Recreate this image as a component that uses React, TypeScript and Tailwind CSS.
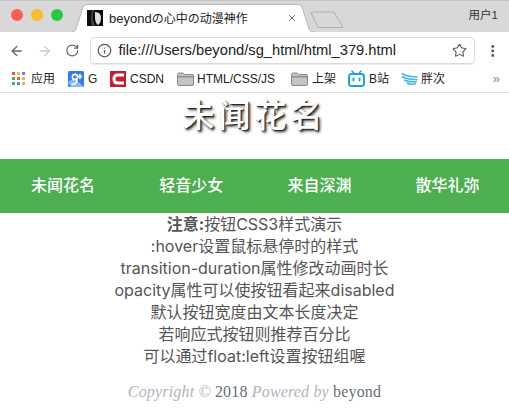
import { ArrowLeft, ArrowRight, Info, MoreVertical, RotateCw, Star, X } from "lucide-react";

const sans = "font-['Liberation_Sans','Noto_Sans_CJK_SC',sans-serif]";
const bodyFont = "font-['Inter','Noto_Sans_CJK_SC',sans-serif]";

function Folder() {
  return (
    <svg width="17" height="14" viewBox="0 0 17 14" className="shrink-0">
      <path d="M0.5 2.5 Q0.5 1 2 1 H6 L7.5 2.5 H15 Q16.5 2.5 16.5 4 V12 Q16.5 13.5 15 13.5 H2 Q0.5 13.5 0.5 12 Z" fill="#c4c4c4" stroke="#8a8a8a" />
      <rect x="1" y="4" width="15" height="1.5" fill="#8f8f8f" />
    </svg>
  );
}

function AppsIcon() {
  const colors = ["#e5574a", "#f2b33d", "#4c8df0", "#4fae5b", "#e5574a", "#f2b33d", "#4fae5b", "#4c8df0", "#f2b33d"];
  return (
    <div className="grid grid-cols-3 gap-[2px] w-[13px] shrink-0">
      {colors.map((c, i) => (
        <span key={i} className="w-[3px] h-[3px]" style={{ background: c }} />
      ))}
    </div>
  );
}

function GoogleIcon() {
  return (
    <svg width="16" height="16" viewBox="0 0 16 16" className="shrink-0">
      <rect width="16" height="16" rx="1.5" fill="#2f7df0" />
      <path d="M0 11 L6 7 L16 16 H3 Z" fill="#8db8f8" />
      <circle cx="7" cy="6" r="2.6" fill="none" stroke="#fff" strokeWidth="1.6" />
      <path d="M8 8 Q10 10 8 12 Q6 14 3.5 13" fill="none" stroke="#fff" strokeWidth="1.6" />
      <path d="M12 3 V8 M9.8 5.5 H14.2" stroke="#fff" strokeWidth="1.6" />
    </svg>
  );
}

function CsdnIcon() {
  return (
    <svg width="16" height="16" viewBox="0 0 16 16" className="shrink-0">
      <rect width="16" height="16" fill="#c4202b" />
      <path d="M14 4 H8 Q4 4 4 8 Q4 12 8 12 H14" fill="none" stroke="#fff" strokeWidth="3" />
    </svg>
  );
}

function BiliIcon() {
  return (
    <svg width="17" height="17" viewBox="0 0 17 17" className="shrink-0">
      <path d="M4 1 L6.5 4 M13 1 L10.5 4" stroke="#1ea5d8" strokeWidth="1.5" strokeLinecap="round" />
      <rect x="1" y="4" width="15" height="12" rx="2.5" fill="none" stroke="#1ea5d8" strokeWidth="2" />
      <path d="M5.5 8.5 V10.5 M11.5 8.5 V10.5" stroke="#1ea5d8" strokeWidth="2" strokeLinecap="round" />
    </svg>
  );
}

function WaveIcon() {
  return (
    <svg width="17" height="14" viewBox="0 0 17 14" className="shrink-0">
      <path d="M0.5 1.5 Q7 5 16.5 5 M1 4.5 Q7 8 16.5 7.5 M3 8 Q8 10.5 16 9.5 M6 11 Q10 13 15 11.5" fill="none" stroke="#45b8e0" strokeWidth="1.5" />
    </svg>
  );
}

function Favicon() {
  return (
    <svg width="16" height="16" viewBox="0 0 16 16" className="shrink-0 relative">
      <rect width="16" height="16" fill="#0c0c0c" />
      <path d="M8 2 Q14 2 14 8 Q14 13 11 15 Q8 13 8 7 Z" fill="#dedede" />
      <path d="M7 0 Q4 8 8 16 H5 Q3 8 5 0 Z" fill="#444" />
    </svg>
  );
}

function Bookmark({ icon, label, className }: { icon: React.ReactNode; label: string; className: string }) {
  return (
    <div className={`flex items-center shrink-0 ${className}`}>
      {icon}
      <span className="text-[12px] text-[#222] whitespace-nowrap">{label}</span>
    </div>
  );
}

function BrowserChrome() {
  return (
    <div className={sans}>
      <div className="h-[32px] bg-[#d8d8d8] border-t border-[#c4c4c4] border-b-[#b8b8b8] flex relative overflow-hidden">
        <div className="flex gap-[8px] pl-[11px] pt-[8px] w-[72px] shrink-0">
          <span className="w-[12px] h-[12px] rounded-full bg-[#fc5b57]" />
          <span className="w-[12px] h-[12px] rounded-full bg-[#fdbc2e]" />
          <span className="w-[12px] h-[12px] rounded-full bg-[#27c93f]" />
        </div>
        <div className="relative w-[244px] h-[31px] pl-[15px] pt-[4px] flex items-start shrink-0">
          <svg width="244" height="28" viewBox="0 0 244 28" className="absolute left-0 top-[3px]">
            <path d="M0 28 Q3 28 4 25 L11 3 Q12 0.5 15 0.5 H226 Q229 0.5 230 3 L237 25 Q238 28 244 28" fill="#fff" stroke="#b8b8b8" />
          </svg>
          <div className="relative flex items-center h-[22px] mt-[2px] w-full">
            <Favicon />
            <span className="ml-[6px] text-[13px] leading-[22px] pt-[1px] text-[#222] whitespace-nowrap">
              beyond<span className="text-[12px]">の心中の动漫神作</span>
            </span>
            <X size={10} strokeWidth={2} className="text-[#444] absolute left-[200px] top-[6px]" />
          </div>
        </div>
        <svg width="34" height="18" viewBox="0 0 34 18" className="mt-[10px] -ml-[6px] shrink-0">
          <path d="M1 1.5 Q1 1 2 1 H24 L33 16.5 H8 Z" fill="#d8d8d8" stroke="#b0b0b0" />
        </svg>
        <span className="ml-auto pr-[11px] pt-[6px] text-[11.5px] text-[#333]">用户1</span>
      </div>
      <div className="h-[33px] bg-white flex items-center pl-[9px] pr-[9px] pt-[4px]">
        <ArrowLeft size={16} strokeWidth={2} className="text-[#666]" />
        <ArrowRight size={16} strokeWidth={2} className="text-[#ccc] ml-[13px]" />
        <RotateCw size={15} strokeWidth={2} className="text-[#666] ml-[12px]" />
        <div className="ml-[10px] h-[27px] w-[385px] shrink-0 border border-[#dcdcdc] rounded-[4px] flex items-center pl-[6px] pr-[7px] shadow-[0_1px_0_#eee]">
          <Info size={15} strokeWidth={2} className="text-[#555] shrink-0" />
          <span className="ml-[7px] text-[14.7px] text-[#222] whitespace-nowrap">file:///Users/beyond/sg_html/html_379.html</span>
          <Star size={15} strokeWidth={1.75} className="text-[#555] ml-auto" />
        </div>
        <MoreVertical size={16} strokeWidth={2.5} className="text-[#555] ml-[10px]" />
      </div>
      <div className="h-[28px] bg-white border-b border-[#e2e2e2] flex items-center pl-[12px] relative">
        <Bookmark icon={<AppsIcon />} label="应用" className="gap-[6px] w-[56px]" />
        <Bookmark icon={<GoogleIcon />} label="G" className="gap-[4px] w-[42px]" />
        <Bookmark icon={<CsdnIcon />} label="CSDN" className="gap-[4px] w-[67px]" />
        <Bookmark icon={<Folder />} label="HTML/CSS/JS" className="gap-[3px] w-[114px]" />
        <Bookmark icon={<Folder />} label="上架" className="gap-[4px] w-[57px]" />
        <Bookmark icon={<BiliIcon />} label="B站" className="gap-[4px] w-[53px]" />
        <Bookmark icon={<WaveIcon />} label="胖次" className="gap-[3px]" />
        <span className="ml-auto pr-[9px] text-[13px] leading-none text-[#888]">»</span>
      </div>
    </div>
  );
}

export default function App() {
  const links = ["未闻花名", "轻音少女", "来自深渊", "散华礼弥"];
  const notes = [
    ":hover设置鼠标悬停时的样式",
    "transition-duration属性修改动画时长",
    "opacity属性可以使按钮看起来disabled",
    "默认按钮宽度由文本长度决定",
    "若响应式按钮则推荐百分比",
    "可以通过float:left设置按钮组喔",
  ];
  return (
    <div className="w-[509px] h-[410px] overflow-hidden bg-white">
      <BrowserChrome />
      <div className={`h-[66px] text-center ${sans}`}>
        <h1 className="pt-[3px] text-[32px] leading-[40px] tracking-[4px] font-medium text-white [text-shadow:1px_1px_1px_#222,2px_2px_3px_#333]">
          未闻花名
        </h1>
      </div>
      <div className={`h-[54px] bg-[#4caf50] flex pl-[31px] ${sans}`}>
        {links.map((l) => (
          <a key={l} className="w-[128.2px] shrink-0 text-[16px] leading-[54px] font-medium text-white whitespace-nowrap">
            {l}
          </a>
        ))}
      </div>
      <div className={`text-center text-[16px] leading-[22px] text-[#555] ${bodyFont}`}>
        <p>
          <b className="font-bold">注意:</b>按钮CSS3样式演示
        </p>
        {notes.map((n) => (
          <p key={n}>{n}</p>
        ))}
      </div>
      <p className="mt-[14px] text-center text-[16px] leading-[22px] tracking-[0.17px] text-[#666e78] font-['Liberation_Serif',serif]">
        <i className="text-[#aeb4bc]">Copyright © </i>2018 <i className="text-[#aeb4bc]">Powered by </i>beyond
      </p>
    </div>
  );
}
